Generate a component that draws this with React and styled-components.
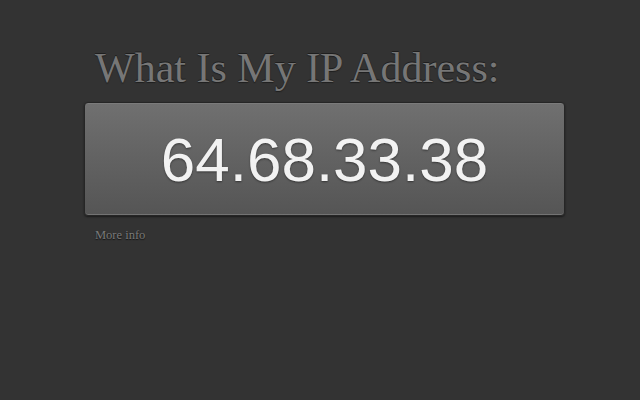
import React from "react";
import styled, { createGlobalStyle } from "styled-components";

const Global = createGlobalStyle`
  html, body {
    margin: 0;
    padding: 0;
    background: #333333;
  }
  body {
    width: 640px;
    height: 400px;
    overflow: hidden;
  }
`;

const Page = styled.main`
  padding: 44px 0 0 84px;
  width: 481px;
`;

const Heading = styled.h1`
  margin: 0 0 10px 11px;
  font-family: "Liberation Serif", "Times New Roman", serif;
  font-weight: normal;
  font-size: 42px;
  line-height: 48px;
  color: #767676;
  text-shadow: 0 1px 1px #1e1e1e, 0 -1px 0 #1e1e1e;
  white-space: nowrap;
`;

const AddressBox = styled.div`
  height: 112px;
  border: 1px solid #262626;
  border-radius: 4px;
  background: linear-gradient(to bottom, #707070 0%, #626262 50%, #555555 100%);
  box-shadow: inset 0 1px 0 rgba(255, 255, 255, 0.08),
    inset 0 -1px 0 rgba(255, 255, 255, 0.18), 0 1px 2px rgba(0, 0, 0, 0.5);
  display: flex;
  align-items: center;
  justify-content: center;
`;

const Address = styled.span`
  font-family: "Liberation Sans", Arial, sans-serif;
  font-size: 62px;
  color: #f2f2f2;
  text-shadow: 0 1px 2px rgba(0, 0, 0, 0.45);
  letter-spacing: 0;
`;

const InfoLink = styled.a`
  display: inline-block;
  margin: 12px 0 0 11px;
  font-family: "Liberation Serif", "Times New Roman", serif;
  font-size: 12.5px;
  color: #7a7a7a;
  text-decoration: none;
  text-shadow: 0 1px 1px #111111;
`;

export default function App() {
  return (
    <>
      <Global />
      <Page>
        <Heading>What Is My IP Address:</Heading>
        <AddressBox>
          <Address>64.68.33.38</Address>
        </AddressBox>
        <InfoLink href="#">More info</InfoLink>
      </Page>
    </>
  );
}
